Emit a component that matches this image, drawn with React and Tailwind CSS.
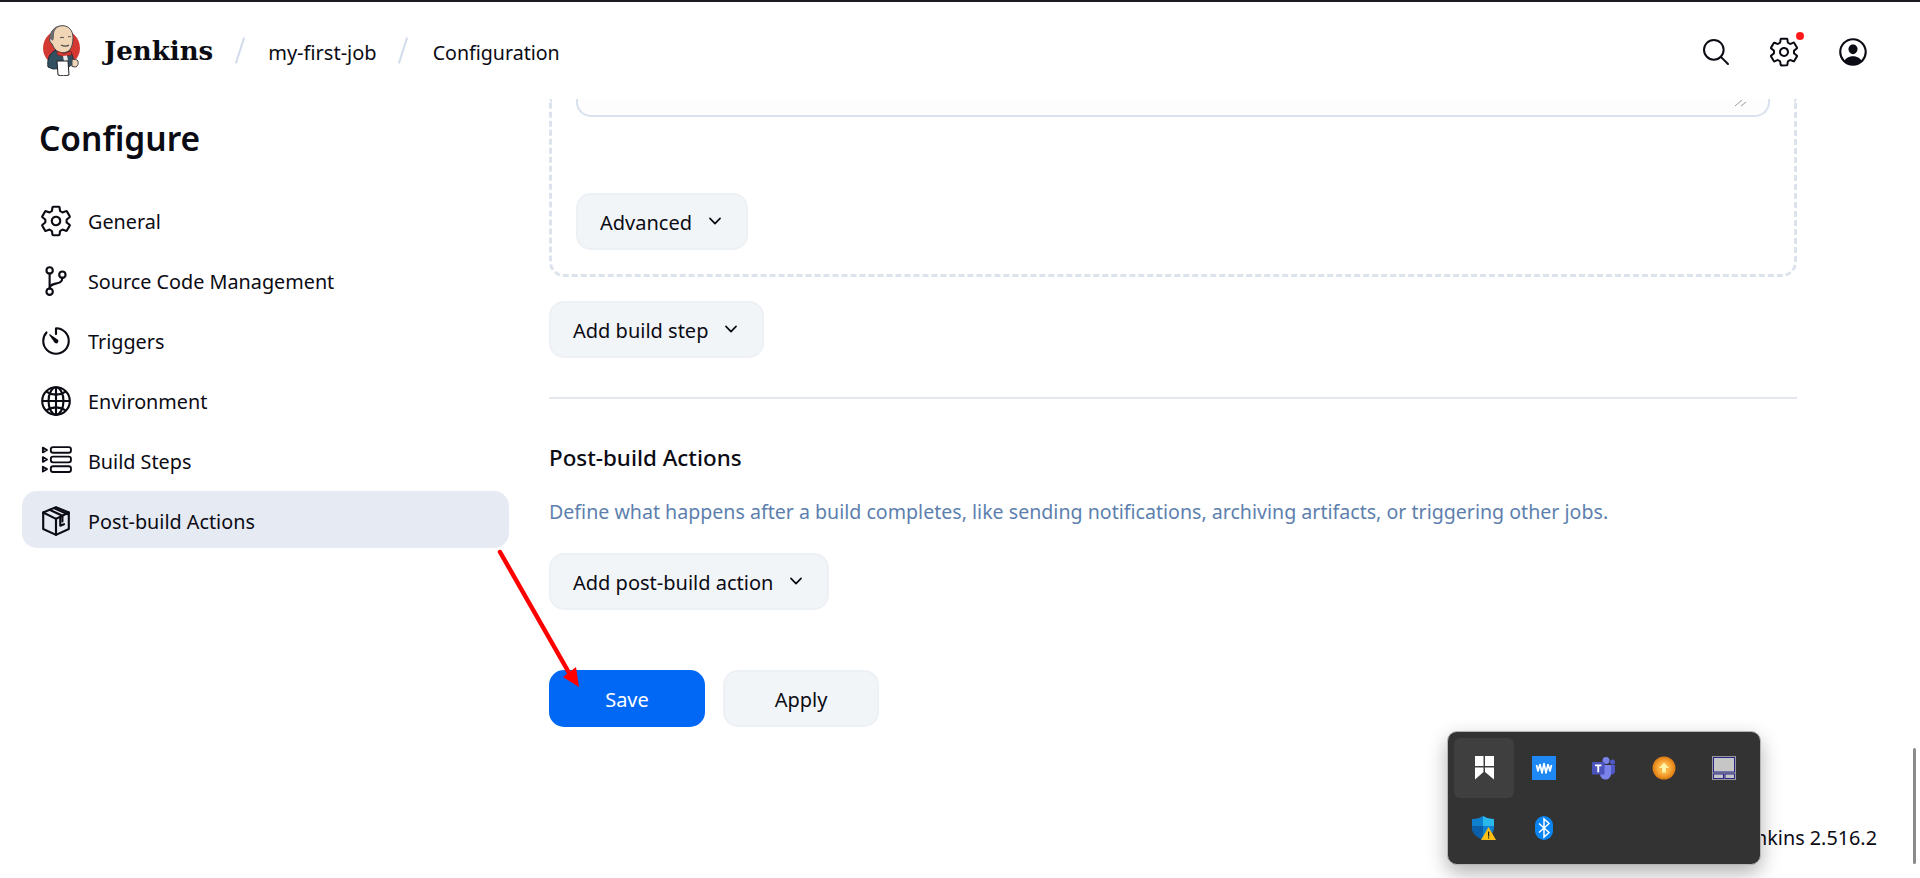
import {
  IoChevronDown,
  IoGitBranchOutline,
  IoGlobeOutline,
  IoPersonCircleOutline,
  IoSearchOutline,
  IoSettingsOutline,
  IoTimerOutline,
} from "react-icons/io5";

function JenkinsLogo() {
  return (
    <svg width="40" height="51" viewBox="0 0 40 51" className="shrink-0">
      <circle cx="21.5" cy="23" r="18.5" fill="#d33833" />
      <path d="M8 42c-1-7 1-14 8-17l14 1c3 4 4 9 3 13l-6 4-14 1z" fill="#335061" stroke="#1d2b36" strokeWidth="1" />
      <path d="M10 12C11 4 17 .5 23 .7c6 .3 10 5 10 12 0 5-1 9-3 12-3 3-8 4-12 2-3-2-5-5-6-8-2-.5-3-4-2-6.700z" fill="#f0d6b7" stroke="#49474a" strokeWidth="1" />
      <path d="M10 14C9 6 15 .8 22 .7c-5 1-8 4-8 9 0 2 0 4-1 6z" fill="#6d6b6d" />
      <path d="M20 13c1-1 3-1 4 0M28 12c1-.6 2-.6 3 0" stroke="#49474a" strokeWidth="1" fill="none" />
      <path d="M21 20c3 1.500 6 1.500 8 0" stroke="#49474a" strokeWidth="1.200" fill="none" />
      <path d="M17 26l7 2.500 7-2.500 .5 4-6 1-2 .5-6-1.500z" fill="#d33833" stroke="#7f1d1a" strokeWidth=".6" />
      <path d="M23 31l4-.5 1 5-4 1z" fill="#e8e8e8" />
      <path d="M17 36h11l1 14c-3 1-8 1-11 0z" fill="#fff" stroke="#231f20" strokeWidth="1" />
      <path d="M32 35c2-1 5-.5 6 1 .6 2 0 5-2 6l-4-.5z" fill="#f0d6b7" stroke="#49474a" strokeWidth="1" />
    </svg>
  );
}

function BuildStepsIcon() {
  return (
    <svg width="31" height="31" viewBox="0 0 30 30" fill="none" stroke="#0b0b14" strokeWidth="1.800">
      <path d="M1.800 2.500l4 2.300-4 2.300zM1.800 11.700l4 2.300-4 2.300zM1.800 21l4 2.300-4 2.300z" strokeLinejoin="round" />
      <rect x="9.500" y="2" width="19.500" height="5.500" rx="2.200" />
      <rect x="9.500" y="11.300" width="19.500" height="5.500" rx="2.200" />
      <rect x="9.500" y="20.600" width="19.500" height="5.500" rx="2.200" />
    </svg>
  );
}

function PackageIcon() {
  return (
    <svg width="32" height="32" viewBox="0 0 30 30" fill="none" stroke="#0b0b14" strokeWidth="2" strokeLinejoin="round" strokeLinecap="round">
      <path d="M15 2l12 5v15.500L15 28 3 22.500V7z" />
      <path d="M3 7l12 6 12-6M15 13v15" />
      <path d="M9 4.500l12 5.500v5.500M13.500 3l12 5.500" />
      <path d="M19 11.500v8l3.500-1.500" />
    </svg>
  );
}

function WinTile() {
  return (
    <svg width="19" height="24" viewBox="0 0 19 24" fill="#fff">
      <rect x="0" y="0" width="8.500" height="10" />
      <rect x="10" y="0" width="9" height="10" />
      <path d="M0 11.500h8.500V16L0 23.500zM10 11.500h9v12L10 16z" />
    </svg>
  );
}

function WavesIcon() {
  return (
    <svg width="24" height="24" viewBox="0 0 24 24">
      <rect width="24" height="24" fill="#1e88f5" />
      <path d="M4.500 9L6 15L8 8.500L10 17L12 7.500L14 17L16 8.500L18 15L19.500 9" fill="none" stroke="#fff" strokeWidth="1.700" strokeLinejoin="round" />
    </svg>
  );
}

function TeamsIcon() {
  return (
    <svg width="24" height="24" viewBox="0 0 24 24">
      <circle cx="14" cy="4.500" r="3.500" fill="#7b83eb" />
      <circle cx="20.500" cy="6" r="2.500" fill="#5059c9" />
      <path d="M17 9h6v6.500a3.500 3.500 0 0 1-6 2z" fill="#5059c9" />
      <path d="M8 9h11v9a5 5 0 0 1-11 0z" fill="#7b83eb" />
      <rect x="0" y="6" width="12.500" height="12.500" rx="1" fill="#4b53bc" />
      <path d="M3 8.500h6.500v1.700H7.200v6H5.300v-6H3z" fill="#fff" />
    </svg>
  );
}

function UpdateIcon() {
  return (
    <svg width="24" height="24" viewBox="0 0 24 24">
      <defs>
        <radialGradient id="updateGlow">
          <stop offset="0.5" stopColor="#fbb040" />
          <stop offset="1" stopColor="#dd7a10" />
        </radialGradient>
      </defs>
      <circle cx="12" cy="12" r="11.500" fill="url(#updateGlow)" />
      <path d="M12 6.500l5 5.500h-3v4.500h-4V12H7z" fill="#fff3a8" />
    </svg>
  );
}

function TouchpadIcon() {
  return (
    <svg width="24" height="24" viewBox="0 0 24 24">
      <rect width="24" height="24" fill="#9a9a9a" />
      <rect x="1.500" y="1.500" width="21" height="14.500" fill="#c6c6c6" stroke="#26268c" strokeWidth="1" />
      <rect x="1.500" y="18" width="10" height="4.500" fill="#c6c6c6" stroke="#26268c" strokeWidth="1" />
      <rect x="13" y="18" width="9.500" height="4.500" fill="#c6c6c6" stroke="#26268c" strokeWidth="1" />
    </svg>
  );
}

function ShieldIcon() {
  return (
    <svg width="24" height="24" viewBox="0 0 24 24">
      <path d="M11 0c3 2 6 3 11 3v9c0 5-5 9-11 12C5 21 0 17 0 12V3c5 0 8-1 11-3z" fill="#0f7fd0" />
      <path d="M11 0c3 2 6 3 11 3v7H11z" fill="#2ab7ea" />
      <path d="M0 10h11v14C5 21 0 17 0 12z" fill="#0a5fa8" />
      <path d="M16.500 11L24 24H9z" fill="#fdbf14" />
      <path d="M16 15.500h1.200v5H16zM16 21.300h1.200v1.200H16z" fill="#222" />
    </svg>
  );
}

function BluetoothIcon() {
  return (
    <svg width="18" height="24" viewBox="0 0 18 24">
      <rect width="18" height="24" rx="9" fill="#0a84f0" />
      <path d="M4 7.500l10 9-5 4.500V3l5 4.500-10 9" fill="none" stroke="#fff" strokeWidth="1.500" />
    </svg>
  );
}

function TrayPopup() {
  const icons = [WinTile, WavesIcon, TeamsIcon, UpdateIcon, TouchpadIcon, ShieldIcon, BluetoothIcon];
  return (
    <div className="absolute left-[1447px] top-[731px] p-[6px] bg-[#333333] border border-[#b5b5b5] rounded-[10px] shadow-[0_8px_20px_rgba(0,0,0,0.3)] grid grid-cols-[repeat(5,60px)] auto-rows-[60px]">
      {icons.map((Icon, i) => (
        <div key={i} className={"flex items-center justify-center rounded-md " + (i === 0 ? "bg-[#3f3f3f]" : "")}>
          <Icon />
        </div>
      ))}
    </div>
  );
}

function RedArrow() {
  return (
    <svg width="100" height="150" viewBox="0 0 100 150" className="absolute left-[490px] top-[545px]">
      <path d="M10 7L82 133" stroke="#ff0000" strokeWidth="4.500" strokeLinecap="round" />
      <path d="M89 142L73 132L86 122z" fill="#ff0000" />
    </svg>
  );
}

function NavItem({ icon, label, active }) {
  return (
    <div className={"h-[57px] mb-[3px] flex items-center gap-[15px] pl-[17px] rounded-[15px] text-[19.8px] " + (active ? "bg-[#e6eaf2]" : "")}>
      <span className="w-[34px] flex justify-center text-[34px] pt-[2px]">{icon}</span>
      <span className="pt-[4px]">{label}</span>
    </div>
  );
}

function DropButton({ label }) {
  return (
    <button className="h-[57px] px-[22px] flex items-center gap-[14px] bg-[#f2f5f8] border-2 border-[#edf0f4] rounded-[15px] text-[20px]">
      <span className="pt-[3px]">{label}</span>
      <IoChevronDown className="text-[18px] -mt-[2px]" />
    </button>
  );
}

export default function App() {
  return (
    <div className="relative h-[878px] overflow-hidden bg-white text-[#0b0b14] font-['Noto_Sans','Open_Sans',sans-serif]">
      <div className="h-[2px] bg-[#1b1b1f]" />

      <header className="h-[97px] flex items-center pl-[40px] pr-[50px]">
        <JenkinsLogo />
        <span className="ml-[24px] mr-[26px] pt-[1px] font-['DejaVu_Serif',serif] font-bold text-[26px]">Jenkins</span>
        <span className="w-[2px] h-[27px] bg-[#d3dcea] rotate-[18deg]" />
        <span className="ml-[27px] mr-[25px] pt-[4px] text-[20px]">my-first-job</span>
        <span className="w-[2px] h-[27px] bg-[#d3dcea] rotate-[18deg]" />
        <span className="ml-[29px] pt-[4px] text-[19.6px]">Configuration</span>
        <div className="ml-auto pt-[3px] flex items-center gap-[36px] text-[32px]">
          <IoSearchOutline />
          <span className="relative">
            <IoSettingsOutline />
            <span className="absolute -top-[4px] -right-[4px] w-[8px] h-[8px] rounded-full bg-[#ff1a1a]" />
          </span>
          <IoPersonCircleOutline className="text-[34px]" />
        </div>
      </header>

      <div className="flex">
        <aside className="w-[549px] pl-[22px] pr-[40px] shrink-0">
          <h1 className="pl-[17px] pt-[14px] h-[92px] text-[33.500px] font-semibold leading-[50px]">Configure</h1>
          <NavItem icon={<IoSettingsOutline />} label="General" />
          <NavItem icon={<IoGitBranchOutline />} label="Source Code Management" />
          <NavItem icon={<IoTimerOutline />} label="Triggers" />
          <NavItem icon={<IoGlobeOutline />} label="Environment" />
          <NavItem icon={<BuildStepsIcon />} label="Build Steps" />
          <NavItem icon={<PackageIcon />} label="Post-build Actions" active />
        </aside>

        <main className="w-[1248px]">
          <div className="h-[178px] border-[3px] border-t-0 border-dashed border-[#dde3ec] rounded-b-[15px] px-[24px]">
            <div className="relative h-[18px] bg-[#fdfdfe] border-2 border-t-0 border-[#d9e1ee] rounded-b-[15px]">
              <svg width="12" height="8" viewBox="0 0 12 8" className="absolute right-[21px] top-0" fill="none" stroke="#9a9a9a">
                <path d="M0 7L7 1M6 7L11 3" />
              </svg>
            </div>
            <div className="mt-[76px]">
              <DropButton label="Advanced" />
            </div>
          </div>

          <div className="mt-[24px]">
            <DropButton label="Add build step" />
          </div>

          <hr className="mt-[39px] border-t-2 border-[#e4e8ee]" />

          <h2 className="mt-[44px] text-[22.400px] font-medium leading-[30px]">Post-build Actions</h2>
          <p className="mt-[26px] text-[19.6px] leading-[26px] text-[#5d7fae]">
            Define what happens after a build completes, like sending notifications, archiving artifacts, or triggering other jobs.
          </p>

          <div className="mt-[28px]">
            <DropButton label="Add post-build action" />
          </div>

          <div className="mt-[60px] flex gap-[18px]">
            <button className="w-[156px] h-[57px] pt-[3px] rounded-[15px] bg-[#0068f5] text-white text-[20px]">Save</button>
            <button className="w-[156px] h-[57px] pt-[3px] rounded-[15px] bg-[#f2f5f8] border-2 border-[#edf0f4] text-[20px]">Apply</button>
          </div>
        </main>
      </div>

      <footer className="flex justify-end pr-[43px] mt-[96px] text-[19.8px]">Jenkins 2.516.2</footer>

      <RedArrow />
      <TrayPopup />
      <div className="absolute left-[1913px] top-[748px] w-[3px] h-[116px] rounded-full bg-[#8b8b8b]" />
    </div>
  );
}
